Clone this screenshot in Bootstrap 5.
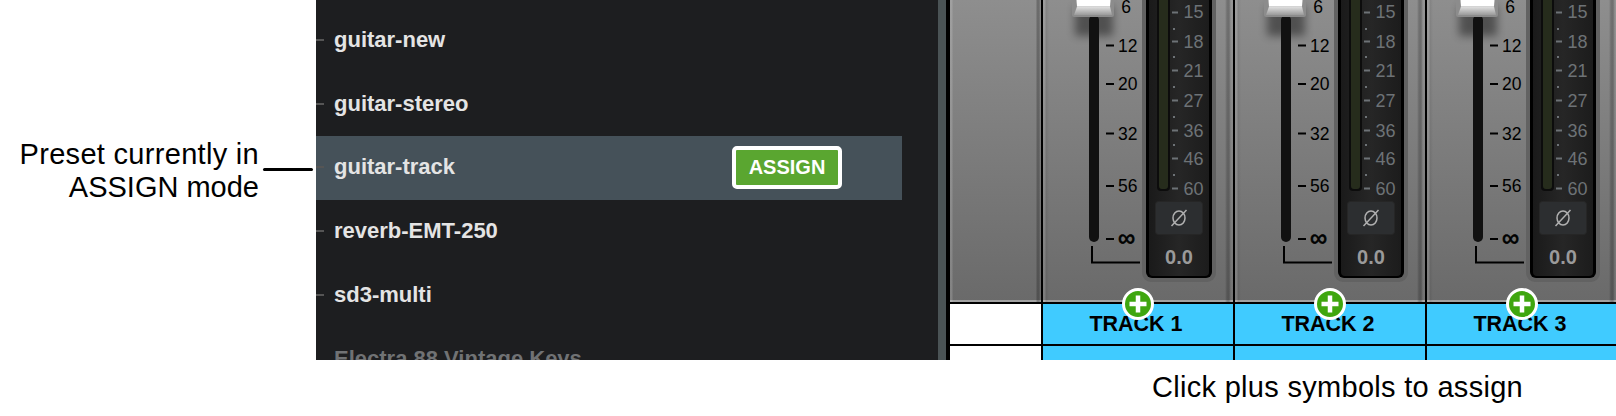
<!doctype html>
<html lang="en">
<head>
<meta charset="utf-8">
<title>Preset assign</title>
<link href="https://cdn.jsdelivr.net/npm/bootstrap@5.3.0/dist/css/bootstrap.min.css" rel="stylesheet">
<style>
html,body{background:#fff;overflow:hidden}
body{font-family:"Liberation Sans",Arial,sans-serif;color:#000;width:1616px;height:416px}
.stage{height:360px}
.callout{width:316px;padding:0 3px 18px 0}
.callout-text{font-size:29px;line-height:33px;text-align:right;letter-spacing:.3px;white-space:nowrap;flex:1}
.callout-tight{letter-spacing:0}
.callout-rule{width:50px;height:3px;background:#000;margin:0 0 0 4px;flex:none;border-radius:2px;position:relative;top:-2px}
.browser{width:622px;background:#1d1e20;padding-top:9px;overflow:hidden}
.browser .list-group{--bs-list-group-bg:transparent;border-radius:0;width:586px}
.browser .list-group-item{height:64px;flex:none;border:0;padding:0 60px 2px 18px;background:transparent;color:#e4e4e4;font-weight:700;font-size:22px;line-height:1;white-space:nowrap;position:relative}
.browser .list-group-item::before{content:"";position:absolute;left:0;top:30px;width:8px;height:2px;background:#555}
.browser .list-group-item.active{background:#455159;color:#e4e4e4}
.browser .list-group-item.folder{color:#707274}
.browser .list-group-item.folder::before{display:none}
.assign-btn{--bs-btn-padding-y:0;--bs-btn-padding-x:0;width:110px;height:43px;background:#5aa630;border:4px solid #fff;border-radius:5px;color:#fff;font-weight:700;font-size:20px;line-height:1}
.divider{width:8px;background:#4a5355;flex:none}
.mixer{width:670px;border-left:4px solid #000;overflow:hidden}
.strips{height:302px;box-shadow:inset 0 -2px 0 #a2a2a2;background:linear-gradient(180deg,#8e8e8e,#6a6a6a)}
.blank-col{width:91px;flex:none;background:linear-gradient(90deg,rgba(255,255,255,.16) 0,rgba(255,255,255,.16) 2px,transparent 3px,transparent calc(100% - 5px),rgba(0,0,0,.24) calc(100% - 4px),rgba(0,0,0,.24) calc(100% - 2px),rgba(255,255,255,.05) 100%)}
.strip{width:192px;flex:none;border-left:2px solid #000;position:relative;background:linear-gradient(90deg,rgba(255,255,255,.12) 0,rgba(255,255,255,.12) 2px,rgba(0,0,0,.08) 3px,transparent 6px,transparent calc(100% - 8px),rgba(0,0,0,.2) calc(100% - 6px),rgba(0,0,0,.22) calc(100% - 4px),rgba(255,255,255,.06) calc(100% - 2px))}
.strip svg.face{display:block;margin-left:-2px;width:192px;height:302px;overflow:visible}
.scale{font-size:17.5px;fill:#000}
.dbs{font-size:18px;fill:#6d7276}
.val{font-size:20px;font-weight:700;fill:#9a9a9a}
.grid-row{border-top:2px solid #000;height:42px}
.grid-row.tail{height:16px}
.cell-blank{width:91px;flex:none;background:#fff}
.cell-track{width:192px;flex:none;border-left:2px solid #000;background:#40cbff;font-weight:700;font-size:21.5px;line-height:1;padding:2px 4px 0 0;position:relative}
.plus-badge{position:absolute;left:79px;top:-16px;width:32px;height:32px;z-index:2}
.caption{font-size:29px;line-height:33px;padding:11px 0 0 1152px;letter-spacing:.3px;white-space:nowrap}
</style>
</head>
<body>
<div class="d-flex stage">
  <div class="callout d-flex align-items-center">
    <div class="callout-text">Preset currently in<br><span class="callout-tight">ASSIGN mode</span></div>
    <div class="callout-rule"></div>
  </div>
  <div class="browser flex-none">
    <div class="list-group list-group-flush">
      <div class="list-group-item d-flex align-items-center">guitar-new</div>
      <div class="list-group-item d-flex align-items-center">guitar-stereo</div>
      <div class="list-group-item active d-flex align-items-center justify-content-between">guitar-track<button type="button" class="btn assign-btn">ASSIGN</button></div>
      <div class="list-group-item d-flex align-items-center">reverb-EMT-250</div>
      <div class="list-group-item d-flex align-items-center">sd3-multi</div>
      <div class="list-group-item folder d-flex align-items-center">Electra 88 Vintage Keys</div>
    </div>
  </div>
  <div class="divider"></div>
  <div class="mixer">
    <div class="strips d-flex">
      <div class="blank-col"></div>
      <div class="strip"></div><div class="strip"></div><div class="strip"></div>
    </div>
    <div class="grid-row d-flex">
      <div class="cell-blank"></div>
      <div class="cell-track d-flex align-items-center justify-content-center"><svg class="plus-badge" viewBox="0 0 32 32"><circle cx="16" cy="16" r="14.5" fill="#3fa60f" stroke="#fff" stroke-width="3"/><path d="M16 7.500v17M7.500 16h17" stroke="#fff" stroke-width="4.500"/></svg>TRACK 1</div>
      <div class="cell-track d-flex align-items-center justify-content-center"><svg class="plus-badge" viewBox="0 0 32 32"><circle cx="16" cy="16" r="14.5" fill="#3fa60f" stroke="#fff" stroke-width="3"/><path d="M16 7.500v17M7.500 16h17" stroke="#fff" stroke-width="4.500"/></svg>TRACK 2</div>
      <div class="cell-track d-flex align-items-center justify-content-center"><svg class="plus-badge" viewBox="0 0 32 32"><circle cx="16" cy="16" r="14.5" fill="#3fa60f" stroke="#fff" stroke-width="3"/><path d="M16 7.500v17M7.500 16h17" stroke="#fff" stroke-width="4.500"/></svg>TRACK 3</div>
    </div>
    <div class="grid-row tail d-flex">
      <div class="cell-blank"></div>
      <div class="cell-track"></div><div class="cell-track"></div><div class="cell-track"></div>
    </div>
  </div>
</div>
<div class="caption">Click plus symbols to assign</div>

<svg width="0" height="0" class="position-absolute">
  <defs>
    <filter id="soft" x="-30%" y="-30%" width="160%" height="160%"><feGaussianBlur stdDeviation="4"/></filter>
    <linearGradient id="bezel" x1="0" y1="0" x2="0" y2="1"><stop offset="0" stop-color="#e2e2e2"/><stop offset="1" stop-color="#9a9a9a"/></linearGradient>
    <linearGradient id="meterbg" x1="0" y1="0" x2="1" y2="0"><stop offset="0" stop-color="#1a1a1a"/><stop offset=".5" stop-color="#262626"/><stop offset="1" stop-color="#1c1c1c"/></linearGradient>
  </defs>
</svg>

<template id="face">
  <svg class="face" viewBox="0 0 192 302">
    <rect x="34" y="6" width="38" height="30" fill="#000" opacity=".42" filter="url(#soft)"/>
    <rect x="48" y="15" width="10" height="227" rx="5" fill="#111"/>
    <rect x="31" y="-6" width="42" height="23" rx="2" fill="#8c8c8c"/>
    <path d="M35-6h35l-1 12.500H36z" fill="#fff"/>
    <path d="M36 6.500h33l2 8.500H33z" fill="url(#bezel)"/>
    <path d="M65 45.500h8M65 84h8M65 133.500h8M65 186h8M65 239h8" stroke="#000" stroke-width="2"/>
    <text class="scale" x="90" y="13" text-anchor="end">6</text>
    <text class="scale" x="96.500" y="51.500" text-anchor="end">12</text>
    <text class="scale" x="96.500" y="90" text-anchor="end">20</text>
    <text class="scale" x="96.500" y="139.500" text-anchor="end">32</text>
    <text class="scale" x="96.500" y="192" text-anchor="end">56</text>
    <text class="scale" x="94" y="246" text-anchor="end" stroke="#000" stroke-width=".7" style="font-size:24px">∞</text>
    <path d="M51 246v16.500h48" fill="none" stroke="#000" stroke-width="2"/>
    <rect x="101" y="-10" width="74" height="292" rx="9" fill="#626262"/>
    <rect x="105" y="-10" width="66" height="288" rx="6" fill="#000"/>
    <rect x="108" y="-10" width="60" height="286" rx="4" fill="url(#meterbg)"/>
    <rect x="116" y="-10" width="13" height="201" rx="4" fill="#0c0c0c"/>
    <rect x="118" y="-10" width="9" height="199" rx="3" fill="#262c1c"/>
    <path d="M131 12.500h6M131 41.500h6M131 70.500h6M131 100.500h6M131 130.500h6M131 158.500h6M131 188.500h6" stroke="#6d7276" stroke-width="2"/>
    <path d="M132 28h2v2h-2zM132 56h2v2h-2zM132 86h2v2h-2zM132 116h2v2h-2zM132 144h2v2h-2zM132 174h2v2h-2z" fill="#6d7276"/>
    <text class="dbs" x="162.500" y="18" text-anchor="end">15</text>
    <text class="dbs" x="162.500" y="47.500" text-anchor="end">18</text>
    <text class="dbs" x="162.500" y="77" text-anchor="end">21</text>
    <text class="dbs" x="162.500" y="107" text-anchor="end">27</text>
    <text class="dbs" x="162.500" y="137" text-anchor="end">36</text>
    <text class="dbs" x="162.500" y="165" text-anchor="end">46</text>
    <text class="dbs" x="162.500" y="195" text-anchor="end">60</text>
    <rect x="114.500" y="201.500" width="47" height="33" rx="3" fill="#2c2e30" stroke="#262626"/>
    <ellipse cx="138" cy="218" rx="6" ry="7" fill="none" stroke="#b0b0b0" stroke-width="1.500"/>
    <path d="M130.500 226l15-16" stroke="#b0b0b0" stroke-width="1.500"/>
    <text class="val" x="138" y="264" text-anchor="middle">0.0</text>
  </svg>
</template>
<script>
document.querySelectorAll('.strip').forEach(function(s){
  s.appendChild(document.getElementById('face').content.cloneNode(true));
});
</script>
<script src="https://cdn.jsdelivr.net/npm/bootstrap@5.3.0/dist/js/bootstrap.bundle.min.js"></script>
</body>
</html>
